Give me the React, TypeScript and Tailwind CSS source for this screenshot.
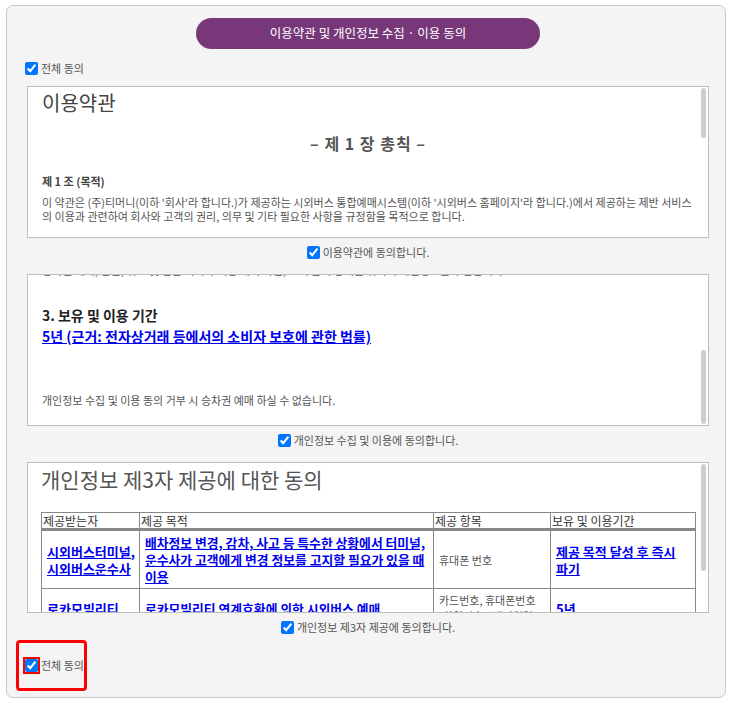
import { useEffect, useRef } from 'react';

const font = { fontFamily: '"Noto Sans CJK KR", "Noto Sans", sans-serif' };

function AgreeRow({ label }: { label: string }) {
  return (
    <label className="flex h-[36px] w-[682px] items-start justify-center gap-[3px] pt-[8px] text-[11px] leading-[13px] text-[#555]">
      <input type="checkbox" defaultChecked className="h-[13px] w-[13px]" />
      <span>{label}</span>
    </label>
  );
}

function Thumb({ top, height }: { top: number; height: number }) {
  // drawn over the box like an overlay scrollbar
  return (
    <div
      className="pointer-events-none absolute right-[2px] w-[5px] rounded-full bg-[#cdcdcd]"
      style={{ top, height }}
    />
  );
}

function TermsBox() {
  return (
    <div className="relative h-[152px] w-[682px] overflow-hidden border border-[#bdbdbd] bg-white">
      <div className="px-[14px] pt-[2px]">
        <h2 className="text-[20px] leading-[28px] text-[#444]">이용약관</h2>
        <p className="mt-[15px] text-center text-[16px] font-bold leading-[22px] tracking-[1px] text-[#555]">
          – 제 1 장 총칙 –
        </p>
        <p className="mt-[20px] text-[11px] font-bold leading-[14px] text-[#444]">제 1 조 (목적)</p>
        <p className="mt-[7px] whitespace-nowrap text-[11px] leading-[14px] text-[#555]">
          이 약관은 (주)티머니(이하 '회사'라 합니다.)가 제공하는 시외버스 통합예매시스템(이하 '시외버스 홈페이지'라 합니다.)에서 제공하는 제반 서비스
          <br />
          의 이용과 관련하여 회사와 고객의 권리, 의무 및 기타 필요한 사항을 규정함을 목적으로 합니다.
        </p>
        <p className="mt-[18px] text-[11px] font-bold leading-[14px] text-[#444]">제 2 조 (용어의 정의)</p>
      </div>
      <Thumb top={1} height={50} />
    </div>
  );
}

function PrivacyBox() {
  const ref = useRef<HTMLDivElement>(null);
  useEffect(() => {
    if (ref.current) ref.current.scrollTop = ref.current.scrollHeight;
  }, []);
  return (
    <div className="relative h-[152px] w-[682px] border border-[#bdbdbd] bg-white">
      <div ref={ref} className="h-full overflow-hidden px-[14px]">
        <h2 className="pt-[5px] text-[20px] leading-[28px] text-[#444]">개인정보 수집 및 이용 동의</h2>
        <p className="mt-[16px] text-[14px] font-bold leading-[18px] text-[#222]">1. 수집 항목</p>
        <p className="text-[11px] leading-[14px] text-[#555]">휴대폰번호, 카드번호, 생년월일, 승차권 예매 및 결제 내역</p>
        <p className="mt-[16px] text-[14px] font-bold leading-[18px] text-[#222]">2. 수집 목적</p>
        <p className="text-[11px] leading-[14px] text-[#555]">
          승차권 예매, 발권, 취소 및 환불 처리와 이용 내역 확인, 고객 문의 응대를 위하여 개인정보를 수집합니다.
        </p>
        <p className="mt-[29px] text-[14px] font-bold leading-[18px] text-[#222]">3. 보유 및 이용 기간</p>
        <p className="mt-[3px] text-[14px] font-bold leading-[18px]">
          <a href="#" className="text-[#0000ee] underline">
            5년 (근거: 전자상거래 등에서의 소비자 보호에 관한 법률)
          </a>
        </p>
        <p className="mt-[48px] pb-[18px] text-[11px] leading-[14px] text-[#555]">
          개인정보 수집 및 이용 동의 거부 시 승차권 예매 하실 수 없습니다.
        </p>
      </div>
      <Thumb top={75} height={74} />
    </div>
  );
}

const rows = [
  {
    to: '시외버스터미널, 시외버스운수사',
    purpose: '배차정보 변경, 감차, 사고 등 특수한 상황에서 터미널, 운수사가 고객에게 변경 정보를 고지할 필요가 있을 때 이용',
    items: '휴대폰 번호',
    period: '제공 목적 달성 후 즉시 파기',
  },
  {
    to: '로카모빌리티',
    purpose: '로카모빌리티 연계호환에 의한 시외버스 예매',
    items: '카드번호, 휴대폰번호 (회원번호), 생년월일',
    period: '5년',
  },
];

const linkCell =
  'border border-[#888] px-[5px] py-[3px] align-middle break-keep text-[13px] font-bold leading-[17px]';

function ThirdPartyBox() {
  return (
    <div className="relative h-[151px] w-[682px] overflow-hidden border border-[#bdbdbd] bg-white">
      <div className="px-[13px]">
        <h2 className="pt-[2px] text-[21px] leading-[28px] text-[#555]">개인정보 제3자 제공에 대한 동의</h2>
        <table className="mt-[19px] w-[654px] table-fixed border-collapse border border-[#888] text-left">
          <colgroup>
            <col className="w-[98px]" />
            <col className="w-[294px]" />
            <col className="w-[117px]" />
            <col className="w-[145px]" />
          </colgroup>
          <thead>
            <tr className="border-b-[3px] border-b-[#888] text-[12px] leading-[15px] text-[#333]">
              <th className="border border-[#888] px-[1px] py-0 font-normal">제공받는자</th>
              <th className="border border-[#888] px-[1px] py-0 font-normal">제공 목적</th>
              <th className="border border-[#888] px-[1px] py-0 font-normal">제공 항목</th>
              <th className="border border-[#888] px-[1px] py-0 font-normal">보유 및 이용기간</th>
            </tr>
          </thead>
          <tbody>
            {rows.map((r) => (
              <tr key={r.to}>
                <td className={linkCell}>
                  <a href="#" className="text-[#0000ee] underline">{r.to}</a>
                </td>
                <td className="border border-[#888] py-[3px] pl-[5px] pr-[2px] align-middle break-keep text-[12.8px] font-bold leading-[17px]">
                  <a href="#" className="text-[#0000ee] underline">{r.purpose}</a>
                </td>
                <td className="border border-[#888] px-[5px] py-[3px] align-middle break-keep text-[11px] leading-[16px] text-[#555]">
                  {r.items}
                </td>
                <td className={linkCell}>
                  <a href="#" className="text-[#0000ee] underline">{r.period}</a>
                </td>
              </tr>
            ))}
          </tbody>
        </table>
      </div>
      <Thumb top={1} height={107} />
    </div>
  );
}

export default function App() {
  return (
    <div className="min-h-screen bg-white pl-[6px] pt-[5px]" style={font}>
      <div className="h-[693px] w-[720px] rounded-[7px] border border-[#c9c9c9] bg-[#f4f4f4] pl-[20px]">
        <div className="flex w-[682px] justify-center pt-[12px]">
          <div className="flex h-[31px] w-[344px] items-center justify-center rounded-full bg-[#773779] text-[12.5px] text-white">
            이용약관 및 개인정보 수집 · 이용 동의
          </div>
        </div>
        <label className="mt-[13px] flex h-[13px] items-center gap-[3px] text-[11px] text-[#555]">
          <input type="checkbox" defaultChecked className="-ml-[2px] h-[13px] w-[13px]" />
          <span>전체 동의</span>
        </label>
        <div className="mt-[11px]">
          <TermsBox />
          <AgreeRow label="이용약관에 동의합니다." />
          <PrivacyBox />
          <AgreeRow label="개인정보 수집 및 이용에 동의합니다." />
          <ThirdPartyBox />
          <AgreeRow label="개인정보 제3자 제공에 동의합니다." />
        </div>
        <div className="-ml-[11px] mt-[-9px] flex h-[51px] w-[71px] items-center rounded-[4px] border-[3px] border-[#ff0000] pl-[6px]">
          <label className="flex items-center gap-[3px] whitespace-nowrap text-[11px] text-[#555]">
            <input type="checkbox" defaultChecked className="h-[13px] w-[13px] outline outline-2 outline-[#ff0000]" />
            <span>전체 동의</span>
          </label>
        </div>
      </div>
    </div>
  );
}
